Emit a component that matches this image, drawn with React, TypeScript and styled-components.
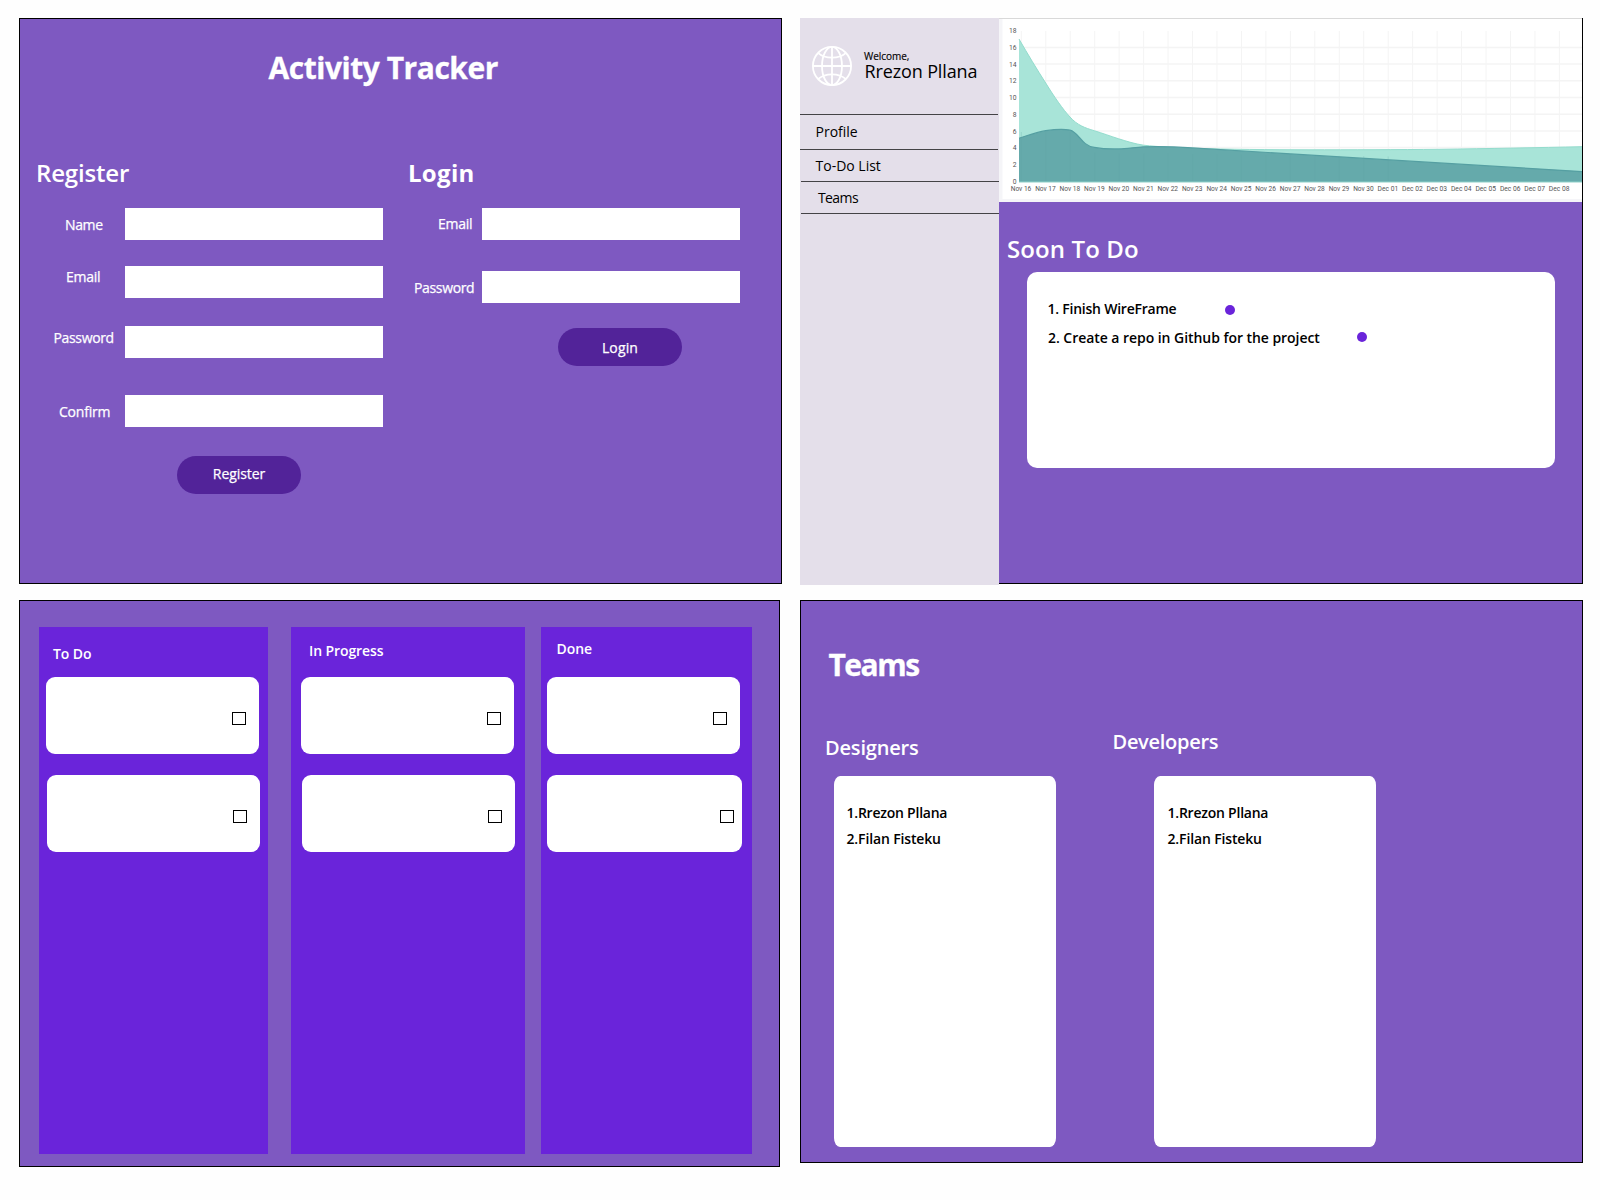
import React from 'react';
import styled, { createGlobalStyle } from 'styled-components';

const GlobalStyle = createGlobalStyle`
  *, *::before, *::after { box-sizing: border-box; }
  body {
    margin: 0;
    background: #fefefe;
    color: #000;
    font-family: 'Open Sans', 'Noto Sans', sans-serif;
  }
  h1, h2, h3, ol, ul { margin: 0; padding: 0; }
  ol, ul { list-style: none; }
`;

const palette = {
  panel: '#7e59c1',
  column: '#6a24da',
  button: '#522399',
  sidebar: '#e4dfea',
  rule: '#444346',
};

/* ---------- page ---------- */

const Page = styled.main`
  display: flex;
  gap: 18px;
  height: 1200px;
  padding: 18px 0 0 19px;
`;

const Stack = styled.div<{ $width: number; $gap: number }>`
  display: flex;
  flex-direction: column;
  gap: ${(p) => p.$gap}px;
  width: ${(p) => p.$width}px;
  flex: none;
`;

const Panel = styled.section<{ $height: number; $width?: number }>`
  height: ${(p) => p.$height}px;
  width: ${(p) => (p.$width ? `${p.$width}px` : '100%')};
  flex: none;
  border: 1px solid #000;
  background: ${palette.panel};
  color: #fff;
`;

const PageTitle = styled.h1<{ $indent: number; $tracking: number; $top: number }>`
  height: ${(p) => p.$top + 39}px;
  padding: ${(p) => p.$top}px 0 0 ${(p) => p.$indent}px;
  font-size: 30px;
  font-weight: 700;
  line-height: 40px;
  letter-spacing: ${(p) => p.$tracking}px;
  white-space: nowrap;
  -webkit-text-stroke: 0.3px currentColor;
`;

const SectionTitle = styled.h2<{ $bold?: boolean; $tracking: number }>`
  font-size: 24px;
  font-weight: ${(p) => (p.$bold ? 700 : 600)};
  line-height: 32px;
  letter-spacing: ${(p) => p.$tracking}px;
  white-space: nowrap;
`;

/* ---------- register / login ---------- */

const Forms = styled.div`
  display: flex;
  padding: 70px 0 0 16px;
`;

const Form = styled.form<{ $width: number }>`
  width: ${(p) => p.$width}px;
`;

const FieldRow = styled.label<{ $gap: number }>`
  display: flex;
  align-items: center;
  height: 32px;
  margin-top: ${(p) => p.$gap}px;
`;

const FieldName = styled.span<{ $width: number; $indent: number; $shift: number; $tracking: number }>`
  width: ${(p) => p.$width}px;
  padding-left: ${(p) => p.$indent}px;
  margin-top: ${(p) => Math.max(0, p.$shift * 2)}px;
  margin-bottom: ${(p) => Math.max(0, -p.$shift * 2)}px;
  font-size: 14px;
  line-height: 20px;
  letter-spacing: ${(p) => p.$tracking}px;
  white-space: nowrap;
  -webkit-text-stroke: 0.25px currentColor;
`;

const Input = styled.input`
  width: 258px;
  height: 32px;
  padding: 0 8px;
  border: 0;
  border-radius: 0;
  background: #fff;
`;

const Button = styled.button<{ $top: number; $left: number; $shift: number; $tracking: number }>`
  display: flex;
  align-items: center;
  justify-content: center;
  width: 124px;
  height: 38px;
  margin: ${(p) => p.$top}px 0 0 ${(p) => p.$left}px;
  padding: ${(p) => Math.max(0, p.$shift * 2)}px 0 ${(p) => Math.max(0, -p.$shift * 2)}px;
  border: 0;
  border-radius: 19px;
  background: ${palette.button};
  color: #fff;
  font: 400 14px/20px 'Open Sans', 'Noto Sans', sans-serif;
  letter-spacing: ${(p) => p.$tracking}px;
  -webkit-text-stroke: 0.25px currentColor;
`;

type FieldSpec = { name: string; gap: number; indent: number; shift: number; tracking: number };

const registerFields: FieldSpec[] = [
  { name: 'Name', gap: 19, indent: 29, shift: 1, tracking: -0.35 },
  { name: 'Email', gap: 26, indent: 30, shift: -5, tracking: -0.25 },
  { name: 'Password', gap: 28, indent: 17.5, shift: -4, tracking: -0.35 },
  { name: 'Confirm', gap: 37, indent: 23, shift: 0.5, tracking: -0.2 },
];

const loginFields: FieldSpec[] = [
  { name: 'Email', gap: 19, indent: 30, shift: 0, tracking: -0.25 },
  { name: 'Password', gap: 31, indent: 6, shift: 1, tracking: -0.35 },
];

function Fields({ items, labelWidth }: { items: FieldSpec[]; labelWidth: number }) {
  return (
    <>
      {items.map((f) => (
        <FieldRow key={f.name} $gap={f.gap}>
          <FieldName $width={labelWidth} $indent={f.indent} $shift={f.shift} $tracking={f.tracking}>
            {f.name}
          </FieldName>
          <Input />
        </FieldRow>
      ))}
    </>
  );
}

function AuthPanel() {
  return (
    <Panel $height={566}>
      <PageTitle $top={29} $indent={248.5} $tracking={-0.47}>Activity Tracker</PageTitle>
      <Forms>
        <Form $width={372}>
          <SectionTitle $tracking={-0.16}>Register</SectionTitle>
          <Fields items={registerFields} labelWidth={89} />
          <Button type="button" $top={29} $left={141} $shift={-1} $tracking={-0.07}>Register</Button>
        </Form>
        <Form $width={332}>
          <SectionTitle $bold $tracking={0.3}>Login</SectionTitle>
          <Fields items={loginFields} labelWidth={74} />
          <Button type="button" $top={25} $left={150} $shift={1} $tracking={0.15}>Login</Button>
        </Form>
      </Forms>
    </Panel>
  );
}

/* ---------- dashboard ---------- */

const DashboardPanel = styled.section`
  display: flex;
  align-items: flex-start;
  height: 567px;
  flex: none;
  margin-bottom: -3px;
`;

const Sidebar = styled.aside`
  width: 199px;
  height: 567px;
  background: ${palette.sidebar};
`;

const Profile = styled.div`
  display: flex;
  gap: 12px;
  height: 96px;
  padding: 28px 0 0 12px;
`;

const Greeting = styled.div`
  display: flex;
  flex-direction: column;
  padding-top: 5px;
  white-space: nowrap;
`;

const Welcome = styled.span`
  font-size: 10px;
  line-height: 10px;
  letter-spacing: -0.05px;
  -webkit-text-stroke: 0.15px currentColor;
`;

const UserName = styled.span`
  padding-left: 0.5px;
  font-size: 18px;
  line-height: 21px;
  letter-spacing: -0.13px;
`;

const NavItem = styled.li<{ $height: number; $shift: number; $indent: number; $tracking: number; $last?: boolean }>`
  display: flex;
  align-items: center;
  width: 198px;
  height: ${(p) => p.$height}px;
  margin-left: ${(p) => p.$shift}px;
  padding-left: ${(p) => p.$indent}px;
  border-top: 1px solid ${palette.rule};
  border-bottom: ${(p) => (p.$last ? `1px solid ${palette.rule}` : '0')};
  font-size: 14px;
  line-height: 20px;
  letter-spacing: ${(p) => p.$tracking}px;
`;

const Main = styled.div`
  flex: 1;
  height: 566px;
  border-right: 1px solid #000;
  border-bottom: 1px solid #000;
  background: ${palette.panel};
`;

const ChartSvg = styled.svg`
  display: block;
  width: 583px;
  height: 184px;
`;

const AxisText = styled.text`
  font-family: Roboto, 'Liberation Sans', sans-serif;
  font-size: 8px;
  fill: #555;
`;

const SoonSection = styled.section`
  padding: 31px 0 0 8px;
  color: #fff;
`;

const SoonCard = styled.ol`
  width: 528px;
  height: 196px;
  margin: 7px 0 0 20px;
  padding: 27px 0 0 20px;
  border-radius: 10px;
  background: #fff;
  color: #000;
`;

const SoonItem = styled.li<{ $shift: number }>`
  display: flex;
  align-items: center;
  height: 20px;
  margin: 0 0 9px ${(p) => p.$shift}px;
`;

const SoonText = styled.span<{ $width: number; $tracking: number }>`
  width: ${(p) => p.$width}px;
  font-size: 14px;
  font-weight: 600;
  line-height: 20px;
  letter-spacing: ${(p) => p.$tracking}px;
  white-space: nowrap;
`;

const Dot = styled.i<{ $drop: number }>`
  width: 10px;
  height: 10px;
  margin-top: ${(p) => Math.max(0, p.$drop * 2)}px;
  margin-bottom: ${(p) => Math.max(0, -p.$drop * 2)}px;
  border-radius: 50%;
  background: ${palette.column};
`;

function GlobeIcon() {
  return (
    <svg width="40" height="40" viewBox="0 0 40 40" fill="none" stroke="#fff" strokeWidth="1.8">
      <circle cx="20" cy="20" r="19.1" />
      <ellipse cx="20" cy="20" rx="10" ry="19.1" />
      <path d="M20 1v38M1 20h38" />
      <path d="M6 6.8C9.5 10 14.5 11.7 20 11.7S30.500 10 34 6.800" />
      <path d="M6 33.200C9.500 30 14.500 28.300 20 28.300S30.500 30 34 33.200" />
    </svg>
  );
}

const days = [
  ...Array.from({ length: 15 }, (_, i) => `Nov ${16 + i}`),
  ...Array.from({ length: 8 }, (_, i) => `Dec 0${1 + i}`),
];
const dayX = (i: number) => 22.3 + i * 24.46;
const valueY = (v: number) => 163 - v * 8.35;

const createdCurve =
  'M20 21C29 36.500 38 51.500 46.700 65C55 78.500 64 91.500 71 99C78 107 86 110 95.300 112.700C104 115.400 112 118.400 119.700 120.800C128 123.400 136 125.900 144.500 127.200C160 129 180 129.700 193 130.200C230 131.500 270 131.700 310 131.800C350 131.800 400 131.700 440 131.300C490 130.600 540 129.600 583 128.700';
const doneCurve =
  'M20 120.200C29 117.400 38 114.200 46.700 112.700C56 111.400 66 111.200 71 112.200C80 114.400 82 127.400 95.300 129.400C104 131 112 131.100 119.700 130.900C128 130.800 136 129.200 144.500 128.800C160 128.400 180 129 193 129.900L583 153.600';

function ActivityChart() {
  return (
    <ChartSvg viewBox="0 0 583 184">
      <rect width="583" height="184" fill="#f5f5f8" />
      <rect x="3.500" width="580" height="181" fill="#fff" />
      <rect width="583" height="1" fill="#d9d9d9" />
      <g stroke="#f4f4f4">
        {days.map((d, i) => (
          <line key={d} x1={dayX(i)} x2={dayX(i)} y1="13" y2="164" />
        ))}
        {[2, 4, 6, 8, 10, 12, 14, 16].map((v) => (
          <line key={v} x1="20" x2="583" y1={valueY(v)} y2={valueY(v)} strokeWidth="1.500" />
        ))}
      </g>
      <path d={`${createdCurve}V164H20Z`} fill="#a8e4d8" />
      <path d={createdCurve} fill="none" stroke="#93dccd" />
      <path d={`${doneCurve}V164H20Z`} fill="#65aaab" />
      <path d={doneCurve} fill="none" stroke="#559fa2" strokeWidth="1.200" />
      <g stroke="#5fa3a5" strokeWidth="0.800" opacity="0.300">
        {days.slice(0, 16).map((d, i) => (
          <line key={d} x1={dayX(i)} x2={dayX(i)} y1={i < 3 ? 114 : 134 + i * 0.3} y2="163" />
        ))}
      </g>
      <line x1="20" x2="583" y1="164" y2="164" stroke="#8fd0c8" />
      {Array.from({ length: 10 }, (_, i) => i * 2).map((v) => (
        <AxisText
          key={v}
          x="17.600"
          y={valueY(v) + 2.6}
          textAnchor="end"
          textLength={v > 9 ? 7.6 : 3.8}
          lengthAdjust="spacingAndGlyphs"
        >
          {v}
        </AxisText>
      ))}
      {days.map((d, i) => (
        <AxisText
          key={d}
          x={dayX(i) - 0.3}
          y="173.400"
          textAnchor="middle"
          textLength="20.600"
          lengthAdjust="spacingAndGlyphs"
        >
          {d}
        </AxisText>
      ))}
    </ChartSvg>
  );
}

function Dashboard() {
  return (
    <DashboardPanel>
      <Sidebar>
        <Profile>
          <GlobeIcon />
          <Greeting>
            <Welcome>Welcome,</Welcome>
            <UserName>Rrezon Pllana</UserName>
          </Greeting>
        </Profile>
        <ul>
          <NavItem $height={35} $shift={0} $indent={15.5} $tracking={0}>Profile</NavItem>
          <NavItem $height={32} $shift={0} $indent={15.5} $tracking={0}>To-Do List</NavItem>
          <NavItem $height={33} $shift={1} $indent={17} $tracking={-0.6} $last>Teams</NavItem>
        </ul>
      </Sidebar>
      <Main>
        <ActivityChart />
        <SoonSection>
          <SectionTitle $tracking={0.11}>Soon To Do</SectionTitle>
          <SoonCard>
            <SoonItem $shift={0.5}>
              <SoonText $width={177.5} $tracking={-0.23}>1. Finish WireFrame</SoonText>
              <Dot $drop={1} />
            </SoonItem>
            <SoonItem $shift={1}>
              <SoonText $width={309} $tracking={-0.05}>2. Create a repo in Github for the project</SoonText>
              <Dot $drop={-1} />
            </SoonItem>
          </SoonCard>
        </SoonSection>
      </Main>
    </DashboardPanel>
  );
}

/* ---------- board ---------- */

const Columns = styled.div`
  display: flex;
  padding: 26px 0 0 19px;
`;

const Column = styled.section<{ $width: number; $gap: number }>`
  width: ${(p) => p.$width}px;
  height: 527px;
  margin-right: ${(p) => p.$gap}px;
  background: ${palette.column};
`;

const ColumnTitle = styled.h3<{ $top: number; $left: number; $tracking: number }>`
  height: 50px;
  padding: ${(p) => p.$top}px 0 0 ${(p) => p.$left}px;
  font-size: 14px;
  font-weight: 600;
  line-height: 20px;
  letter-spacing: ${(p) => p.$tracking}px;
`;

const TaskCard = styled.article<{ $left: number; $width: number; $inset: number }>`
  display: flex;
  justify-content: flex-end;
  width: ${(p) => p.$width}px;
  height: 77px;
  margin: 0 0 21px ${(p) => p.$left}px;
  padding: 35px ${(p) => p.$inset}px 0 0;
  border-radius: 9px;
  background: #fff;
`;

const Checkbox = styled.input.attrs({ type: 'checkbox' })`
  appearance: none;
  width: 14px;
  height: 13px;
  margin: 0;
  border: 1px solid #000;
`;

const board = [
  { title: 'To Do', width: 229, gap: 23, top: 17, left: 14, tracking: -0.1, cards: [[7, 213, 13], [8, 213, 13]] },
  { title: 'In Progress', width: 234, gap: 16, top: 13.6, left: 18, tracking: -0.1, cards: [[10, 213, 13], [11, 213, 13]] },
  { title: 'Done', width: 211, gap: 0, top: 12, left: 15.5, tracking: -0.05, cards: [[6, 193, 13], [6, 195, 8]] },
];

function Board() {
  return (
    <Panel $height={567} $width={761}>
      <Columns>
        {board.map((c) => (
          <Column key={c.title} $width={c.width} $gap={c.gap}>
            <ColumnTitle $top={c.top} $left={c.left} $tracking={c.tracking}>{c.title}</ColumnTitle>
            {c.cards.map(([left, width, inset], i) => (
              <TaskCard key={i} $left={left} $width={width} $inset={inset}>
                <Checkbox />
              </TaskCard>
            ))}
          </Column>
        ))}
      </Columns>
    </Panel>
  );
}

/* ---------- teams ---------- */

const TeamList = styled.div`
  display: flex;
  padding-left: 24px;
`;

const Team = styled.section<{ $width: number }>`
  width: ${(p) => p.$width}px;
`;

const TeamTitle = styled.h2<{ $top: number; $tracking: number }>`
  height: 92px;
  padding-top: ${(p) => p.$top}px;
  font-size: 20px;
  font-weight: 600;
  line-height: 28px;
  letter-spacing: ${(p) => p.$tracking}px;
`;

const Members = styled.ol<{ $left: number; $indent: number }>`
  width: 222px;
  height: 371px;
  margin-left: ${(p) => p.$left}px;
  padding: 27px 0 0 ${(p) => p.$indent}px;
  border-radius: 6px / 9px;
  background: #fff;
  color: #000;
`;

const Member = styled.li<{ $tracking: number }>`
  margin-bottom: 6px;
  font-size: 14px;
  font-weight: 600;
  line-height: 20px;
  letter-spacing: ${(p) => p.$tracking}px;
`;

const teams = [
  { name: 'Designers', width: 287.5, top: 49.5, tracking: -0.18, left: 9, indent: 12.5 },
  { name: 'Developers', width: 280, top: 44, tracking: -0.28, left: 41.5, indent: 13.5 },
];

function Teams() {
  return (
    <Panel $height={563}>
      <PageTitle $top={44} $indent={27.5} $tracking={-1.5}>Teams</PageTitle>
      <TeamList>
        {teams.map((t) => (
          <Team key={t.name} $width={t.width}>
            <TeamTitle $top={t.top} $tracking={t.tracking}>{t.name}</TeamTitle>
            <Members $left={t.left} $indent={t.indent}>
              <Member $tracking={-0.23}>1.Rrezon Pllana</Member>
              <Member $tracking={-0.14}>2.Filan Fisteku</Member>
            </Members>
          </Team>
        ))}
      </TeamList>
    </Panel>
  );
}

export default function App() {
  return (
    <>
      <GlobalStyle />
      <Page>
        <Stack $width={763} $gap={16}>
          <AuthPanel />
          <Board />
        </Stack>
        <Stack $width={783} $gap={18}>
          <Dashboard />
          <Teams />
        </Stack>
      </Page>
    </>
  );
}
